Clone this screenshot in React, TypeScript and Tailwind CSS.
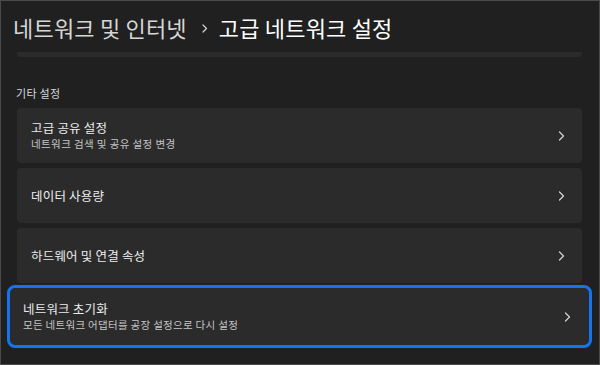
const font = { fontFamily: '"Noto Sans CJK KR", "Noto Sans", sans-serif' };

type Item = { title: string; desc?: string };

const items: Item[] = [
  { title: "고급 공유 설정", desc: "네트워크 검색 및 공유 설정 변경" },
  { title: "데이터 사용량" },
  { title: "하드웨어 및 연결 속성" },
];

function Chevron({ className = "" }: { className?: string }) {
  return (
    <svg width="7" height="10" viewBox="0 0 7 10" className={className} fill="none">
      <polyline points="1.5,1 5.5,5 1.5,9" stroke="#d4d4d4" strokeWidth="1.2" strokeLinejoin="round" strokeLinecap="round" />
    </svg>
  );
}

function Row({ item }: { item: Item }) {
  return (
    <div className="flex h-[55px] items-center justify-between rounded-[4px] bg-[#2b2b2b] pl-[14px] pr-[17px]">
      <div className="flex flex-col gap-[1px]">
        <span className="text-[12.5px] leading-[16px] tracking-[0.2px] text-[#ececec]">{item.title}</span>
        {item.desc && <span className="text-[10.5px] leading-[14px] tracking-[0.4px] text-[#c4c4c4]">{item.desc}</span>}
      </div>
      <Chevron />
    </div>
  );
}

export default function App() {
  return (
    <div style={font} className="h-[365px] w-[600px] overflow-hidden border border-[#4b4b4b] bg-[#202020]">
      <div className="flex h-[51px] items-center pl-[12px] pt-[1px]">
        <span className="text-[22px] tracking-[0.2px] text-[#d6d6d6]">네트워크 및 인터넷</span>
        <svg width="6" height="9" viewBox="0 0 6 9" fill="none" className="ml-[15px] mr-[11px] mt-[2px]">
          <polyline points="1,1 4.5,4.5 1,8" stroke="#d6d6d6" strokeWidth="1.2" strokeLinejoin="round" strokeLinecap="round" />
        </svg>
        <span className="text-[22px] tracking-[0.2px] text-white">고급 네트워크 설정</span>
      </div>
      <div className="ml-[16px] h-[5px] w-[565px] rounded-b-[3px] bg-[#2b2b2b]" />
      <div className="ml-[15px] mt-[28px] h-[22px] text-[11px] tracking-[0.3px] text-[#d8d8d8]">기타 설정</div>
      <div className="ml-[16px] mt-[1px] flex w-[565px] flex-col gap-[5px]">
        {items.map((it) => (
          <Row key={it.title} item={it} />
        ))}
        <div className="-mx-[10px] mt-[-3px] flex h-[63px] items-center justify-between rounded-[8px] border-[3px] border-[#1474f0] bg-[#2b2b2b] pl-[13px] pr-[18px]">
          <div className="flex flex-col gap-[1px]">
            <span className="text-[12.5px] leading-[16px] tracking-[0.2px] text-[#ececec]">네트워크 초기화</span>
            <span className="text-[10.5px] leading-[14px] tracking-[0.3px] text-[#c4c4c4]">모든 네트워크 어댑터를 공장 설정으로 다시 설정</span>
          </div>
          <Chevron />
        </div>
      </div>
    </div>
  );
}
